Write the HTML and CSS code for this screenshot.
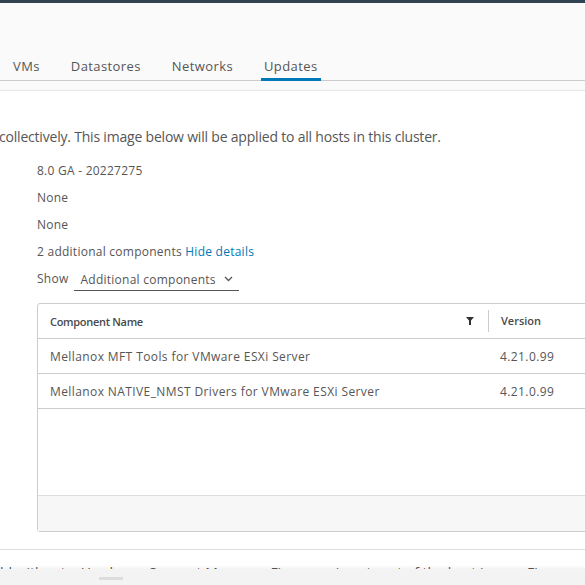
FILE: index.html
```html
<!DOCTYPE html>
<html lang="en">
<head>
    <meta charset="UTF-8">
    <meta name="viewport" content="width=device-width, initial-scale=1.0">
    <title>Cluster Updates</title>
    <link rel="stylesheet" href="styles.css">
</head>
<body>
    <div class="topbar"></div>

    <div class="header">
        <nav class="tabs">
            <a class="tab">VMs</a>
            <a class="tab">Datastores</a>
            <a class="tab">Networks</a>
            <a class="tab active">Updates</a>
        </nav>
    </div>
    <div class="subbar"></div>

    <main class="content">
        <p class="intro">collectively. This image below will be applied to all hosts in this cluster.</p>

        <div class="details">
            <div class="detail-row">8.0 GA - 20227275</div>
            <div class="detail-row">None</div>
            <div class="detail-row">None</div>
            <div class="detail-row">2 additional components <a class="link">Hide details</a></div>
            <div class="detail-row show-row">
                <span class="show-label">Show</span>
                <span class="select">
                    Additional components
                    <svg class="chevron" width="9" height="6" viewBox="0 0 9 6"><path d="M1 1l3.5 3.5L8 1" fill="none" stroke="#565656" stroke-width="1.3"/></svg>
                </span>
            </div>
        </div>

        <div class="grid">
            <div class="grid-head">
                <div class="cell name-col">
                    <span>Component Name</span>
                    <svg class="filter" width="8" height="8" viewBox="0 0 8 8"><path d="M0 0h8L5 3.5V8H3V3.5z" fill="#313131"/></svg>
                </div>
                <div class="cell version-col sep">Version</div>
            </div>
            <div class="grid-row">
                <div class="cell name-col">Mellanox MFT Tools for VMware ESXi Server</div>
                <div class="cell version-col">4.21.0.99</div>
            </div>
            <div class="grid-row">
                <div class="cell name-col">Mellanox NATIVE_NMST Drivers for VMware ESXi Server</div>
                <div class="cell version-col">4.21.0.99</div>
            </div>
            <div class="grid-empty"></div>
            <div class="grid-foot"></div>
        </div>

        <div class="divider"></div>
        <p class="note">ld without a Hardware Support Manager. Firmware is not part of the host image. Fi</p>
    </main>

    <div class="hscroll"><div class="thumb"></div></div>
</body>
</html>
```

FILE: styles.css
```css
html, body {
    margin: 0;
    overflow: hidden;
}
body {
    font-family: "Open Sans", Lato, sans-serif;
    color: #565656;
    background: #fff;
    height: 585px;
    position: relative;
}
.topbar {
    height: 3px;
    background: #314351;
}
.header {
    height: 77px;
    background: #fafafa;
    border-bottom: 1px solid #ccc;
    display: flex;
    align-items: flex-end;
}
.tabs {
    display: flex;
    gap: 25px;
    padding-left: 10px;
}
.tab {
    font-size: 13px;
    letter-spacing: 0.4px;
    color: #565656;
    padding: 0 3px;
    height: 27px;
    line-height: 24px;
    margin-bottom: -1px;
}
.tab.active {
    box-shadow: inset 0 -3px 0 #0079b8;
}
.subbar {
    height: 9px;
    background: #fafafa;
    border-bottom: 1px solid #e6e6e6;
}
.content {
    padding-top: 36px;
}
.intro {
    margin: 0 0 0 -1px;
    font-size: 14px;
    letter-spacing: -0.2px;
    line-height: 20px;
    white-space: nowrap;
}
.details {
    margin: 10px 0 0 37px;
    font-size: 12px;
    letter-spacing: 0.25px;
}
.detail-row {
    height: 27px;
    line-height: 27px;
    white-space: nowrap;
}
.link {
    color: #0079b8;
}
.show-row {
    display: flex;
    align-items: center;
    gap: 6px;
}
.select {
    display: flex;
    align-items: center;
    gap: 8px;
    height: 22px;
    padding: 0 6px 0 6px;
    border-bottom: 1px solid #565656;
    margin-top: 2px;
}
.grid {
    margin: 11px 0 0 37px;
    width: 640px;
    border: 1px solid #ccc;
    border-radius: 3px;
    font-size: 12px;
    letter-spacing: 0.4px;
}
.grid-head, .grid-row {
    display: flex;
    height: 34px;
    border-bottom: 1px solid #ccc;
    align-items: center;
}
.grid-head {
    font-size: 11px;
    font-weight: 600;
    letter-spacing: -0.3px;
    color: #4a4a4a;
}
.cell {
    padding: 0 12px;
}
.name-col {
    width: 426px;
    display: flex;
    justify-content: space-between;
    align-items: center;
}
.version-col {
    flex: 1;
}
.sep {
    border-left: 1px solid #ccc;
    height: 22px;
    line-height: 22px;
    letter-spacing: 0;
}
.filter {
    margin-right: 2px;
}
.grid-empty {
    height: 86px;
    border-bottom: 1px solid #ddd;
}
.grid-foot {
    height: 35px;
    background: #f7f7f7;
}
.divider {
    margin-top: 17px;
    border-top: 1px solid #ddd;
}
.note {
    margin: 13px 0 0;
    font-size: 14px;
    white-space: nowrap;
}
.hscroll {
    position: absolute;
    left: 0;
    right: 0;
    bottom: 0;
    height: 16px;
    background: #f3f3f3;
    box-shadow: 0 -2px 3px rgba(0, 0, 0, 0.05);
}
.thumb {
    position: absolute;
    left: 99px;
    top: 8px;
    width: 24px;
    height: 3px;
    background: #ddd;
}
```
